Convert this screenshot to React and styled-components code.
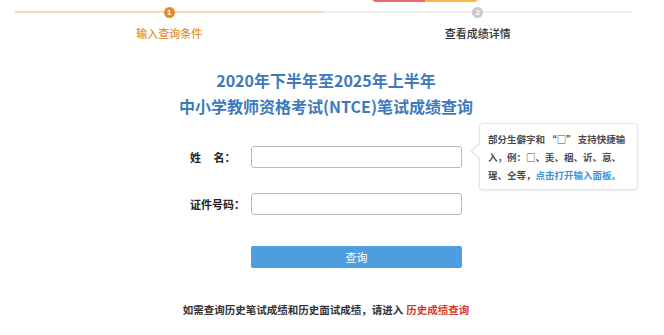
import styled, { createGlobalStyle } from "styled-components";

const Global = createGlobalStyle`
  body {
    margin: 0;
    background: #fff;
    font-family: "Noto Sans CJK SC", "Noto Sans", sans-serif;
  }
`;

const Page = styled.div`
  position: relative;
  width: 664px;
  height: 335px;
  overflow: hidden;
`;

const TopTab = styled.div`
  position: absolute;
  top: -4px;
  left: 372px;
  width: 106px;
  height: 6px;
  border-radius: 0 0 4px 4px;
  background: linear-gradient(90deg, #f0626a 0 50%, #f5b944 50% 100%);
`;

const Steps = styled.div`
  display: flex;
  margin-left: 15px;
  width: 617px;
`;

const Step = styled.div`
  flex: 1;
  display: flex;
  flex-direction: column;
  align-items: center;
`;

const Track = styled.div`
  position: relative;
  width: 100%;
  height: 24px;
  display: flex;
  justify-content: center;
  align-items: center;

  &::before {
    content: "";
    position: absolute;
    left: 0;
    right: 0;
    top: 11px;
    height: 2px;
    background: ${(p) => (p.$active ? "#f3d9b3" : "#eeeeee")};
  }
`;

const Dot = styled.span`
  position: relative;
  width: 11px;
  height: 11px;
  border-radius: 50%;
  background: ${(p) => (p.$active ? "#e58a2c" : "#c9c9c9")};
  color: #fff;
  font-family: "Liberation Sans", sans-serif;
  font-size: 8px;
  font-weight: bold;
  line-height: 11px;
  text-align: center;
`;

const StepLabel = styled.div`
  margin-top: 1px;
  font-size: 11px;
  line-height: 16px;
  font-weight: 500;
  color: ${(p) => (p.$active ? "#e0913a" : "#333")};
`;

const Main = styled.div`
  width: 652px;
`;

const Title = styled.h1`
  margin: 26px 0 0;
  text-align: center;
  font-size: 16px;
  line-height: 26px;
  font-weight: bold;
  color: #3d7abb;
`;

const Form = styled.div`
  position: relative;
  margin-top: 27px;
  padding-left: 190px;
  display: flex;
  flex-direction: column;
  gap: 25px;
`;

const Row = styled.div`
  display: flex;
  align-items: center;
`;

const Label = styled.label`
  width: 61px;
  font-size: 11px;
  font-weight: bold;
  color: #222;
  white-space: pre;
`;

const Input = styled.input`
  box-sizing: border-box;
  width: 211px;
  height: 22px;
  border: 1px solid #b9b9b9;
  border-radius: 3px;
  background: #fff;
  outline: none;
`;

const Tip = styled.div`
  position: absolute;
  left: 479px;
  top: -23px;
  box-sizing: border-box;
  width: 159px;
  padding: 6px 8px 5px 8px;
  border: 1px solid #dce6ef;
  border-radius: 4px;
  background: #fff;
  box-shadow: 0 1px 3px rgba(120, 150, 180, 0.18);
  font-size: 9.5px;
  line-height: 18px;
  font-weight: bold;
  color: #4a4a4a;
  white-space: nowrap;

  &::before,
  &::after {
    content: "";
    position: absolute;
    top: 18px;
    border-style: solid;
    border-color: transparent;
  }
  &::before {
    left: -10px;
    border-width: 9px 10px 9px 0;
    border-right-color: #dce6ef;
  }
  &::after {
    left: -8px;
    top: 19px;
    border-width: 8px 9px 8px 0;
    border-right-color: #fff;
  }
`;

const TipLine = styled.div`
  display: flex;
`;

const TipLink = styled.a`
  color: #3d93d8;
  text-decoration: none;
`;

const Button = styled.button`
  margin: 31px 0 0 251px;
  width: 211px;
  height: 22px;
  border: none;
  border-radius: 2px;
  background: #4d9de0;
  color: #fff;
  font-family: inherit;
  font-size: 11px;
  cursor: pointer;
`;

const Note = styled.p`
  margin: 34px 0 0;
  text-align: center;
  font-size: 10.5px;
  font-weight: bold;
  color: #333;
`;

const NoteLink = styled.a`
  margin-left: 3px;
  color: #d93a2c;
  text-decoration: none;
`;

const steps = [
  { n: 1, label: "输入查询条件", active: true },
  { n: 2, label: "查看成绩详情", active: false },
];

export default function App() {
  return (
    <>
      <Global />
      <Page>
        <TopTab />
        <Steps>
          {steps.map((s) => (
            <Step key={s.n}>
              <Track $active={s.active}>
                <Dot $active={s.active}>{s.n}</Dot>
              </Track>
              <StepLabel $active={s.active}>{s.label}</StepLabel>
            </Step>
          ))}
        </Steps>

        <Main>
          <Title>
            2020年下半年至2025年上半年
            <br />
            中小学教师资格考试(NTCE)笔试成绩查询
          </Title>

          <Form>
            <Row>
              <Label>{"姓     名："}</Label>
              <Input type="text" />
            </Row>
            <Row>
              <Label>证件号码：</Label>
              <Input type="text" />
            </Row>
            <Tip>
              <TipLine>部分生僻字和 “□” 支持快捷输</TipLine>
              <TipLine>入，例：□、羙、栶、䜣、恴、</TipLine>
              <TipLine>
                瑆、仝等，<TipLink href="#">点击打开输入面板。</TipLink>
              </TipLine>
            </Tip>
          </Form>

          <Button>查询</Button>

          <Note>
            如需查询历史笔试成绩和历史面试成绩，请进入
            <NoteLink href="#">历史成绩查询</NoteLink>
          </Note>
        </Main>
      </Page>
    </>
  );
}
